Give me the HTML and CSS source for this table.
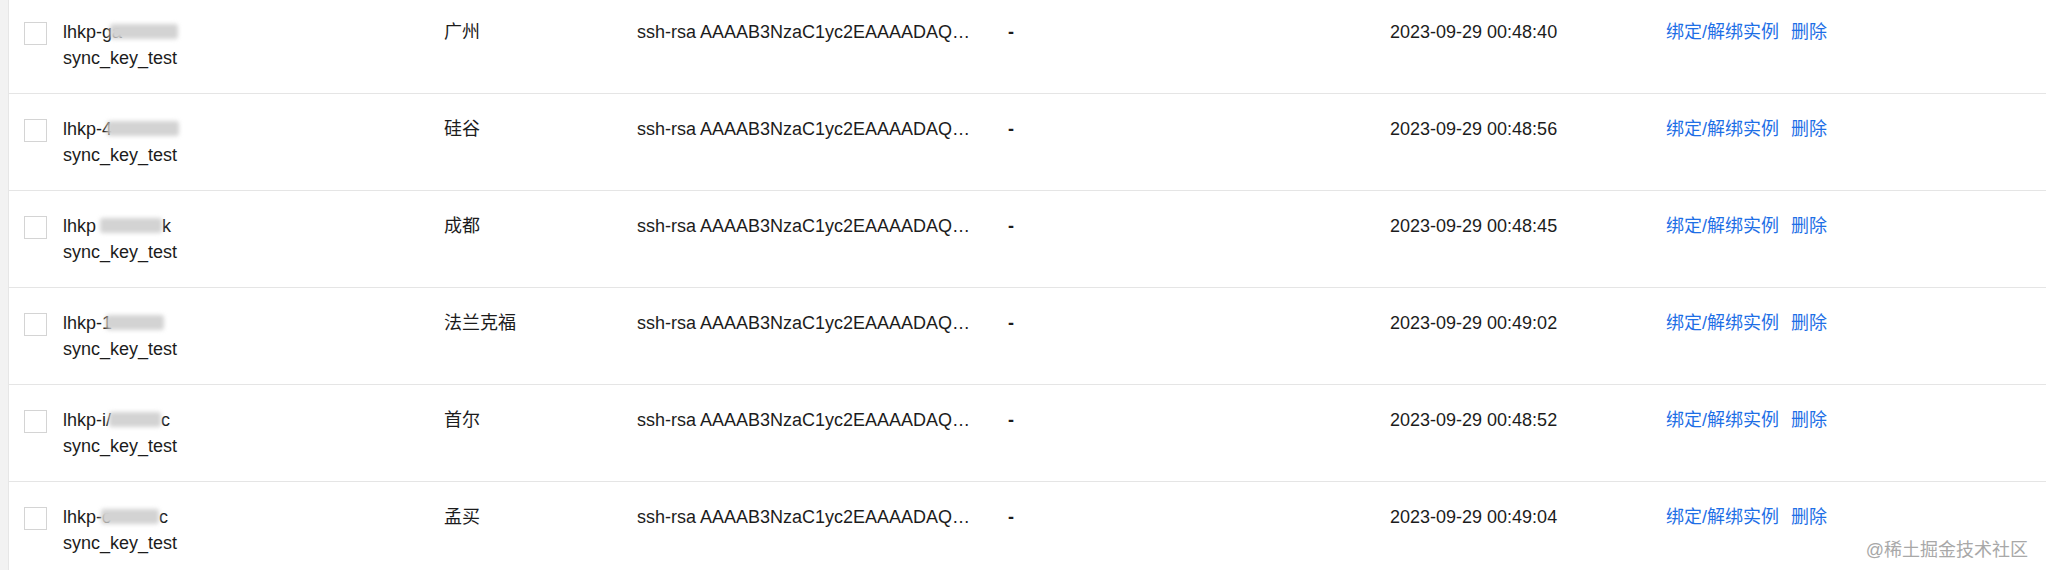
FILE: index.html
```html
<!DOCTYPE html>
<html>
<head>
  <title>SSH 密钥列表</title>
  <link rel="stylesheet" href="styles.css">
</head>
<body>

  <div class="page">
    <div class="side"></div>

    <!-- Key table -->
    <div class="table">

      <div class="row">
        <span class="check"></span>
        <div class="name">
          <div>lhkp-ga<span class="mask" style="width: 68px; margin-left: -12px;"></span></div>
          <div>sync_key_test</div>
        </div>
        <div>广州</div>
        <div class="key">ssh-rsa AAAAB3NzaC1yc2EAAAADAQ…</div>
        <div class="dash">-</div>
        <div>2023-09-29 00:48:40</div>
        <div class="ops"><a href="#">绑定/解绑实例</a><a href="#">删除</a></div>
      </div>

      <div class="row">
        <span class="check"></span>
        <div class="name">
          <div>lhkp-4<span class="mask" style="width: 72px; margin-left: -5px;"></span></div>
          <div>sync_key_test</div>
        </div>
        <div>硅谷</div>
        <div class="key">ssh-rsa AAAAB3NzaC1yc2EAAAADAQ…</div>
        <div class="dash">-</div>
        <div>2023-09-29 00:48:56</div>
        <div class="ops"><a href="#">绑定/解绑实例</a><a href="#">删除</a></div>
      </div>

      <div class="row">
        <span class="check"></span>
        <div class="name">
          <div>lhkp<span class="mask" style="width: 62px; margin-left: 4px;"></span>k</div>
          <div>sync_key_test</div>
        </div>
        <div>成都</div>
        <div class="key">ssh-rsa AAAAB3NzaC1yc2EAAAADAQ…</div>
        <div class="dash">-</div>
        <div>2023-09-29 00:48:45</div>
        <div class="ops"><a href="#">绑定/解绑实例</a><a href="#">删除</a></div>
      </div>

      <div class="row">
        <span class="check"></span>
        <div class="name">
          <div>lhkp-1<span class="mask" style="width: 58px; margin-left: -6px;"></span></div>
          <div>sync_key_test</div>
        </div>
        <div>法兰克福</div>
        <div class="key">ssh-rsa AAAAB3NzaC1yc2EAAAADAQ…</div>
        <div class="dash">-</div>
        <div>2023-09-29 00:49:02</div>
        <div class="ops"><a href="#">绑定/解绑实例</a><a href="#">删除</a></div>
      </div>

      <div class="row">
        <span class="check"></span>
        <div class="name">
          <div>lhkp-i/<span class="mask" style="width: 52px; margin-left: -2px;"></span>c</div>
          <div>sync_key_test</div>
        </div>
        <div>首尔</div>
        <div class="key">ssh-rsa AAAAB3NzaC1yc2EAAAADAQ…</div>
        <div class="dash">-</div>
        <div>2023-09-29 00:48:52</div>
        <div class="ops"><a href="#">绑定/解绑实例</a><a href="#">删除</a></div>
      </div>

      <div class="row">
        <span class="check"></span>
        <div class="name">
          <div>lhkp-c<span class="mask" style="width: 58px; margin-left: -10px;"></span>c</div>
          <div>sync_key_test</div>
        </div>
        <div>孟买</div>
        <div class="key">ssh-rsa AAAAB3NzaC1yc2EAAAADAQ…</div>
        <div class="dash">-</div>
        <div>2023-09-29 00:49:04</div>
        <div class="ops"><a href="#">绑定/解绑实例</a><a href="#">删除</a></div>
      </div>

    </div>
  </div>

  <div class="watermark">@稀土掘金技术社区</div>

</body>
</html>
```

FILE: styles.css
```css
body {
  margin: 0;
  font-family: "Liberation Sans", "Noto Sans CJK SC", sans-serif;
  font-size: 18px;
  line-height: 26px;
  color: #1c1c1c;
  background: #fff;
  overflow: hidden;
}

.page {
  display: flex;
  height: 570px;
}

.side {
  width: 8px;
  flex: none;
  background: #f2f2f2;
  border-right: 1px solid #e6e6e6;
}

.table {
  flex: 1;
  margin-top: -3px;
}

.row {
  display: grid;
  grid-template-columns: 39px 381px 193px 371px 382px 276px 1fr;
  align-items: start;
  padding: 22px 0 22px 15px;
  border-bottom: 1px solid #e5e5e5;
}

.check {
  width: 21px;
  height: 21px;
  margin-top: 3px;
  border: 1px solid #d4d4d4;
  background: #fff;
}

.mask {
  display: inline-block;
  height: 15px;
  vertical-align: -1px;
  background: #d3d3d3;
  border-radius: 3px;
  filter: blur(2px);
}

.key {
  white-space: nowrap;
}

.dash {
  font-weight: bold;
}

.ops {
  display: flex;
  gap: 12px;
}

.ops a {
  color: #1e6fe6;
  text-decoration: none;
}

.watermark {
  position: absolute;
  right: 18px;
  bottom: 8px;
  font-size: 18px;
  line-height: 24px;
  color: #a8a8a8;
}
```
